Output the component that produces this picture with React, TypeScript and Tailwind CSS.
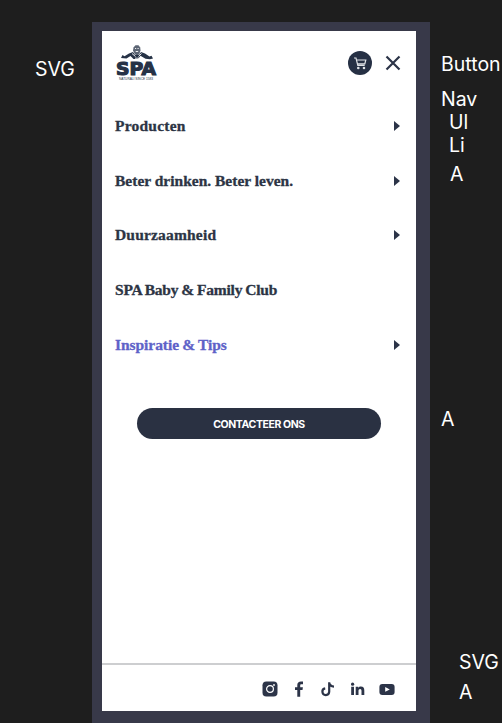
import React from "react";

type Item = { label: string; arrow: boolean; active?: boolean; track: string };

const items: Item[] = [
  { label: "Producten", arrow: true, track: "tracking-[0.220px]" },
  { label: "Beter drinken. Beter leven.", arrow: true, track: "tracking-[0px]" },
  { label: "Duurzaamheid", arrow: true, track: "tracking-[0.180px]" },
  { label: "SPA Baby & Family Club", arrow: false, track: "tracking-[-0.200px] [word-spacing:-0.700px]" },
  { label: "Inspiratie & Tips", arrow: true, active: true, track: "tracking-[-0.060px] [word-spacing:-0.600px]" },
];

function Logo() {
  return (
    <svg width="44" height="38" viewBox="0 0 44 38" fill="#263246" aria-label="SPA">
      <path d="m6 14 1.500-3 2 1.200L14 9.500l4-1.500 2 3h4l2-3 4 1.500 4.500 3 2-.7 1.500 2.700-3 .8-4.500-.5-5-3-2.500 3.200h-4.500L15.500 12l-4 2.500z" />
      <path d="M18.500 3.500 20.500 1.300h3L25.200 3.500l.3 3-1 3-2.500 3-2.500-3-1.500-3z" opacity=".75" />
      <path d="M20 4.500h1.200m1.300 0h1.200M20.700 7.500h2.500M17 9.500l3.500 3M26.500 9.500l-3 3M20 14.200h4" stroke="#fff" strokeWidth=".9" />
      <text x="1" y="30.500" textLength="40" lengthAdjust="spacingAndGlyphs" fontFamily="DejaVu Sans, sans-serif" fontWeight="700" fontSize="18.500" stroke="#263246" strokeWidth="1.200">SPA</text>
      <text x="4" y="35.800" textLength="34" lengthAdjust="spacingAndGlyphs" fontFamily="Liberation Sans, sans-serif" fontSize="3.600">NATURALI SINCE 1583</text>
    </svg>
  );
}

function Cart() {
  return (
    <span className="flex h-6 w-6 items-center justify-center rounded-full bg-[#263044]">
      <svg width="14" height="14" viewBox="0 0 14 14" fill="none" stroke="#dfe2e6" strokeWidth="1.200">
        <path d="M1 2h2l1.800 7.300h6.900M3.500 4h9.300l-1 3.900H4.500" />
        <circle cx="5.300" cy="12" r=".7" fill="#dfe2e6" />
        <circle cx="11" cy="12" r=".7" fill="#dfe2e6" />
      </svg>
    </span>
  );
}

function Socials() {
  return (
    <div className="flex h-4 items-center text-[#2c3448]">
      <svg width="16" height="16" viewBox="0 0 16 16">
        <rect x=".5" y=".5" width="15" height="15" rx="3.800" fill="currentColor" />
        <circle cx="8" cy="8" r="3.400" fill="none" stroke="#fff" strokeWidth="1.200" />
        <circle cx="12" cy="4" r=".9" fill="#fff" />
      </svg>
      <svg className="ml-[14px]" width="16" height="16" viewBox="0 0 16 16" fill="currentColor">
        <path d="M5.300 15.700V9H3V6.200h2.300V4.100C5.300 1.600 6.700.4 9 .4c.9 0 1.600.1 2 .2v2.600H9.500c-1 0-1.300.5-1.300 1.300v1.700h2.700L10.500 9H8.200v6.700z" />
      </svg>
      <svg className="ml-[12px]" width="16" height="16" viewBox="0 0 16 16" fill="none" stroke="currentColor" strokeWidth="2.200">
        <path d="M9.200 1.300v9.500a3.400 3.400 0 1 1-4-3.500M9.200 1.800c.4 2.400 2.200 3.700 4.800 3.800" />
      </svg>
      <svg className="ml-[14px]" width="16" height="16" viewBox="0 0 16 16" fill="currentColor">
        <circle cx="2.600" cy="3.200" r="1.600" />
        <path d="M1.200 5.800h2.800V14H1.200zM5.700 5.800h2.600v1.100c.5-.8 1.400-1.300 2.600-1.300 2.500 0 3.400 1.400 3.400 3.900V14h-2.800v-4c0-1.300-.4-2-1.300-2-1.200 0-1.700.8-1.700 2.100V14H5.700z" />
      </svg>
      <svg className="ml-[13px]" width="16" height="16" viewBox="0 0 16 16">
        <rect x=".4" y="2.900" width="15.200" height="11" rx="3" fill="currentColor" />
        <path d="m6.200 6 4.600 2.400-4.600 2.400z" fill="#fff" />
      </svg>
    </div>
  );
}

export default function App() {
  return (
    <div className="flex h-[723px] w-[502px] overflow-hidden bg-[#1e1e1e] font-['Inter',sans-serif] text-[19.500px] font-normal leading-[23px] text-white">
      <div className="w-[92px] shrink-0 pl-[35px] pt-[58px]">SVG</div>

      <div className="mt-[22px] w-[338px] shrink-0 bg-[#383949] pb-3 pl-[10px] pr-[14px] pt-[9px]">
        <div className="flex h-[680px] flex-col bg-white text-[#2c3444]">
          <header className="flex h-[67px] items-start pl-[13px] pt-[13px]">
            <Logo />
            <div className="ml-[189px] mt-[7px] flex h-6 items-center">
              <Cart />
              <svg className="ml-[13px]" width="16" height="16" viewBox="0 0 16 16" stroke="#2c3448" strokeWidth="2.200">
                <path d="m1.500 1.500 13 13m0-13-13 13" />
              </svg>
            </div>
          </header>

          <nav>
            <ul>
              {items.map((item) => (
                <li key={item.label} className="flex h-[54.800px] items-center justify-between pl-[13px] pr-4">
                  <a className={`whitespace-nowrap font-['Liberation_Serif',serif] text-[15.500px] font-bold [-webkit-text-stroke:0.300px_currentColor] ${item.track} ${item.active ? "text-[#5e62c8]" : ""}`}>
                    {item.label}
                  </a>
                  {item.arrow && (
                    <svg className="mt-px" width="6" height="10" viewBox="0 0 6 10" fill="#2c3448">
                      <path d="M0 0v10l6-5z" />
                    </svg>
                  )}
                </li>
              ))}
            </ul>
          </nav>

          <a className="ml-[35px] mt-[36px] flex h-[31px] w-[244px] items-center justify-center rounded-full bg-[#2a3142] pt-[2px] text-[10.500px] font-bold tracking-[-0.400px] text-white">
            CONTACTEER ONS
          </a>

          <footer className="mt-auto flex h-[48px] items-center justify-end border-t-2 border-[#cdced0] pr-[21px] pt-px">
            <Socials />
          </footer>
        </div>
      </div>

      <div className="w-[72px] shrink-0 whitespace-nowrap pl-[11px] pt-[53px]">
        <p>Button</p>
        <p className="mt-3">Nav</p>
        <p className="pl-2">Ul</p>
        <p className="pl-2">Li</p>
        <p className="mt-[6px] pl-[9px]">A</p>
        <p className="mt-[222px]">A</p>
        <p className="mt-[220px] pl-[18px]">SVG</p>
        <p className="mt-[7px] pl-[18px]">A</p>
      </div>
    </div>
  );
}
